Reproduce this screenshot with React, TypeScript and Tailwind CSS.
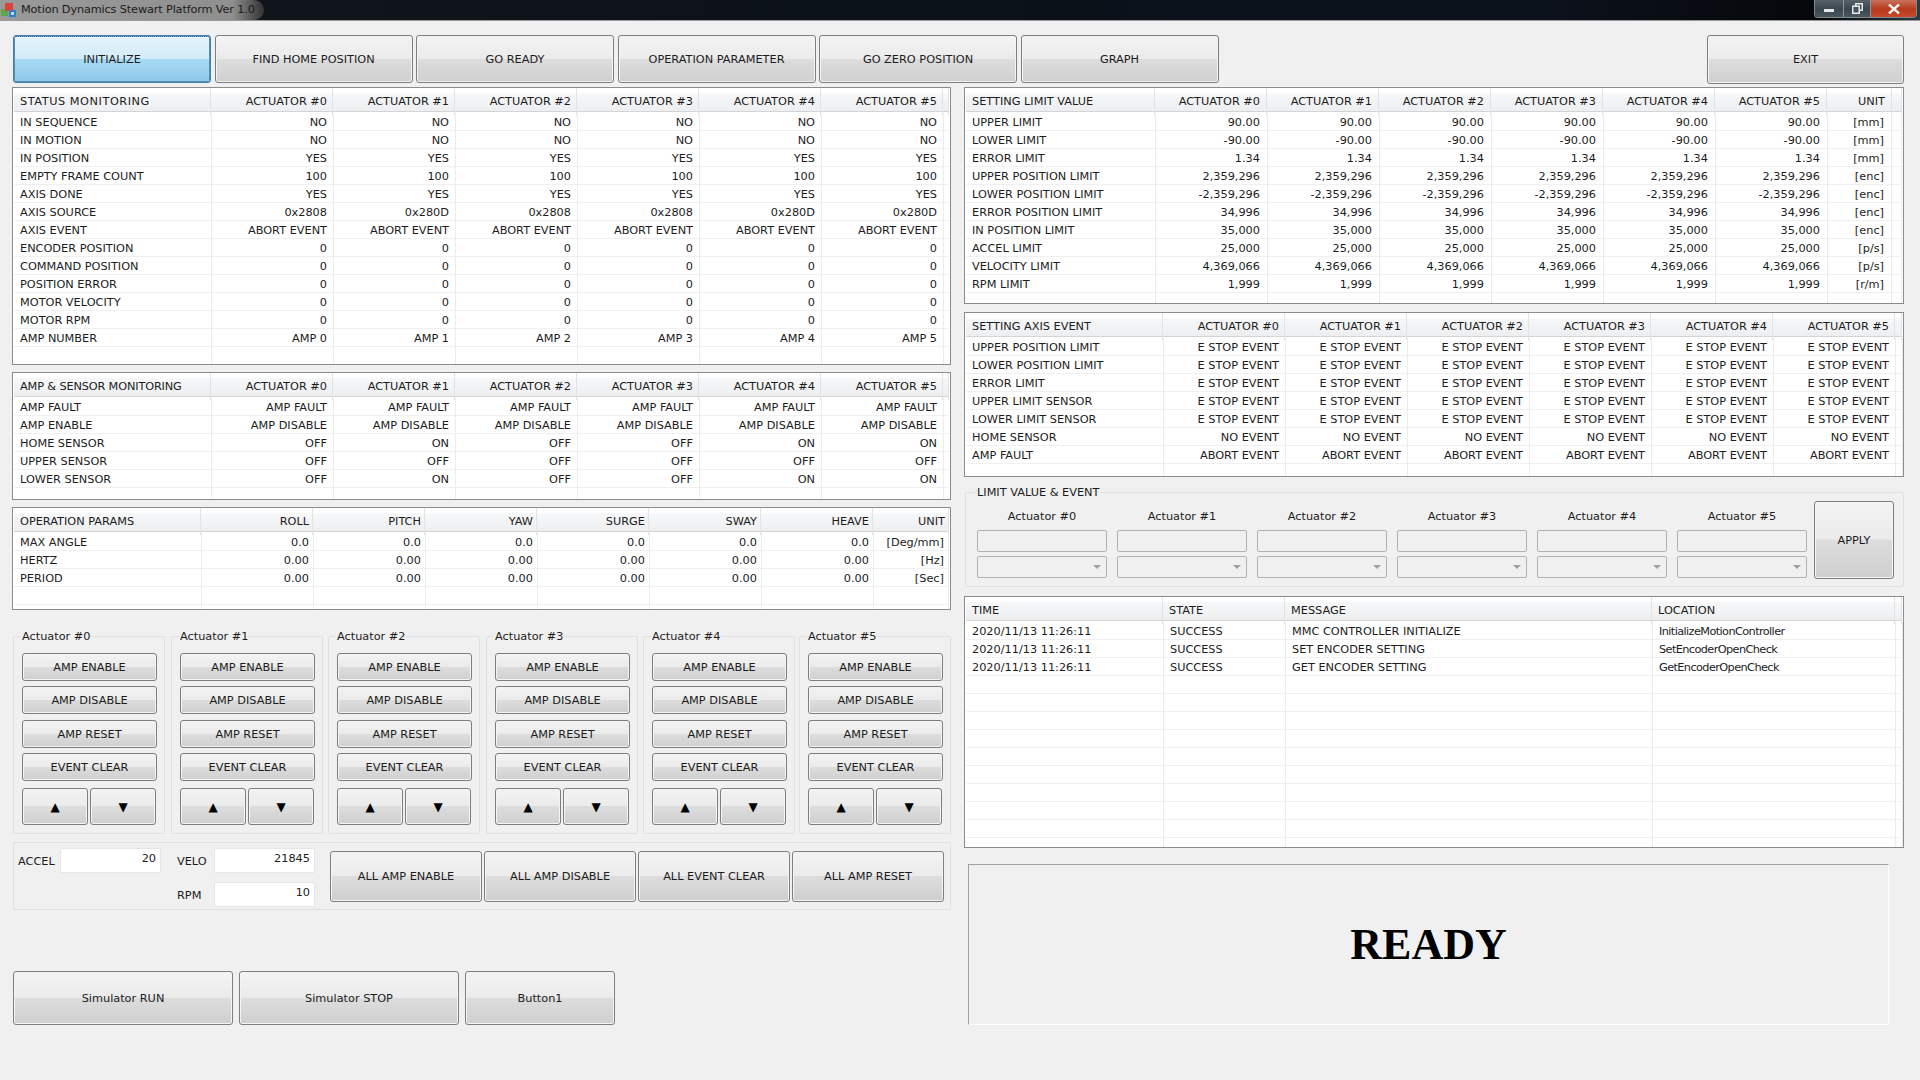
import React from "react";

const ACT = ["ACTUATOR #0", "ACTUATOR #1", "ACTUATOR #2", "ACTUATOR #3", "ACTUATOR #4", "ACTUATOR #5"];
const LABELS = ["Actuator #0", "Actuator #1", "Actuator #2", "Actuator #3", "Actuator #4", "Actuator #5"];

const same = (label: string, v: string, extra?: string): string[] => {
  const r = [label, v, v, v, v, v, v];
  if (extra) r.push(extra);
  return r;
};

const statusRows: string[][] = [
  same("IN SEQUENCE", "NO"),
  same("IN MOTION", "NO"),
  same("IN POSITION", "YES"),
  same("EMPTY FRAME COUNT", "100"),
  same("AXIS DONE", "YES"),
  ["AXIS SOURCE", "0x2808", "0x280D", "0x2808", "0x2808", "0x280D", "0x280D"],
  same("AXIS EVENT", "ABORT EVENT"),
  same("ENCODER POSITION", "0"),
  same("COMMAND POSITION", "0"),
  same("POSITION ERROR", "0"),
  same("MOTOR VELOCITY", "0"),
  same("MOTOR RPM", "0"),
  ["AMP NUMBER", "AMP 0", "AMP 1", "AMP 2", "AMP 3", "AMP 4", "AMP 5"],
];

const ampRows: string[][] = [
  same("AMP FAULT", "AMP FAULT"),
  same("AMP ENABLE", "AMP DISABLE"),
  ["HOME SENSOR", "OFF", "ON", "OFF", "OFF", "ON", "ON"],
  same("UPPER SENSOR", "OFF"),
  ["LOWER SENSOR", "OFF", "ON", "OFF", "OFF", "ON", "ON"],
];

const opRows: string[][] = [
  ["MAX ANGLE", "0.0", "0.0", "0.0", "0.0", "0.0", "0.0", "[Deg/mm]"],
  ["HERTZ", "0.00", "0.00", "0.00", "0.00", "0.00", "0.00", "[Hz]"],
  ["PERIOD", "0.00", "0.00", "0.00", "0.00", "0.00", "0.00", "[Sec]"],
];

const limitRows: string[][] = [
  same("UPPER LIMIT", "90.00", "[mm]"),
  same("LOWER LIMIT", "-90.00", "[mm]"),
  same("ERROR LIMIT", "1.34", "[mm]"),
  same("UPPER POSITION LIMIT", "2,359,296", "[enc]"),
  same("LOWER POSITION LIMIT", "-2,359,296", "[enc]"),
  same("ERROR POSITION LIMIT", "34,996", "[enc]"),
  same("IN POSITION LIMIT", "35,000", "[enc]"),
  same("ACCEL LIMIT", "25,000", "[p/s]"),
  same("VELOCITY LIMIT", "4,369,066", "[p/s]"),
  same("RPM LIMIT", "1,999", "[r/m]"),
];

const eventRows: string[][] = [
  same("UPPER POSITION LIMIT", "E STOP EVENT"),
  same("LOWER POSITION LIMIT", "E STOP EVENT"),
  same("ERROR LIMIT", "E STOP EVENT"),
  same("UPPER LIMIT SENSOR", "E STOP EVENT"),
  same("LOWER LIMIT SENSOR", "E STOP EVENT"),
  same("HOME SENSOR", "NO EVENT"),
  same("AMP FAULT", "ABORT EVENT"),
];

const logRows: string[][] = [
  ["2020/11/13 11:26:11", "SUCCESS", "MMC CONTROLLER INITIALIZE", "InitializeMotionController"],
  ["2020/11/13 11:26:11", "SUCCESS", "SET ENCODER SETTING", "SetEncoderOpenCheck"],
  ["2020/11/13 11:26:11", "SUCCESS", "GET ENCODER SETTING", "GetEncoderOpenCheck"],
];

interface TableProps {
  heads: React.ReactNode[];
  rows: string[][];
  headCols: string;
  rowCols: string;
  cols: number;
  height: string;
  blanks?: number;
  leftAll?: boolean;
  headPad?: string;
  rowPad?: string;
}

// cols = cells per row, including the narrow stub at the right edge
const DataTable: React.FC<TableProps> = ({
  heads,
  rows,
  headCols,
  rowCols,
  cols,
  height,
  blanks = 2,
  leftAll,
  headPad = "pr-[5px]",
  rowPad = "pr-[6px]",
}) => {
  const blank = Array.from({ length: blanks }, () => [] as string[]);
  const align = (i: number, pad: string) => (i === 0 || leftAll ? "pl-[6px] text-left" : `${pad} text-right`);
  return (
    <div className={`border border-[#8c8c8c] bg-white px-px overflow-hidden ${height}`}>
      <div className={`grid ${headCols} h-[24px] mb-px border-b border-[#d4d4d4] bg-[linear-gradient(#ffffff_0%,#ffffff_21%,#f7f8f9_22%,#edeef0_100%)]`}>
        {Array.from({ length: cols }, (_, i) => (
          <div key={i} className={`border-r border-[#e2e3e5] leading-[27px] whitespace-nowrap ${align(i, headPad)}`}>
            {heads[i]}
          </div>
        ))}
      </div>
      {[...rows, ...blank].map((row, r) => (
        <div key={r} className={`grid ${rowCols} h-[18px] border-b border-[#f0f0f0]`}>
          {Array.from({ length: cols }, (_, i) => (
            <div
              key={i}
              className={`border-r border-[#ececec] leading-[19px] whitespace-nowrap ${align(i, rowPad)} ${
                leftAll && i === 3 ? "tracking-[-0.6px]" : ""
              }`}
            >
              {row[i]}
            </div>
          ))}
        </div>
      ))}
    </div>
  );
};

interface BtnProps {
  label: React.ReactNode;
  size: string;
  active?: boolean;
}

const Btn: React.FC<BtnProps> = ({ label, size, active }) => (
  <button
    type="button"
    className={`${size} shrink-0 rounded-[3px] border pt-[2px] text-center ${
      active
        ? "border-[#3c7fb1] bg-[linear-gradient(#e6f4fc_0%,#d2ecf9_49%,#a9daf3_50%,#8cc8ea_100%)] shadow-[inset_0_0_0_1px_#7fbde0] outline-1 outline-dotted -outline-offset-2 outline-[#3f5f75]"
        : "border-[#7e7e7e] bg-[linear-gradient(#f3f3f3_0%,#ebebeb_49%,#dddddd_50%,#cfcfcf_100%)] shadow-[inset_0_0_0_1px_#f4f4f4]"
    }`}
  >
    {label}
  </button>
);

const ActuatorGroup: React.FC<{ name: string }> = ({ name }) => (
  <div className="w-[152px] h-[198px] border border-[#e0e0e0] rounded-[2px] pl-[8px]">
    <div className="w-fit -mt-[9px] -ml-[1px] px-[1px] bg-[#f0f0f0] h-[17px] leading-[17px]">{name}</div>
    <div className="flex flex-col pt-[8px] w-[135px]">
      <Btn label="AMP ENABLE" size="w-[135px] h-[28px]" />
      <div className="h-[5px]" />
      <Btn label="AMP DISABLE" size="w-[135px] h-[28px]" />
      <div className="h-[6px]" />
      <Btn label="AMP RESET" size="w-[135px] h-[28px]" />
      <div className="h-[5px]" />
      <Btn label="EVENT CLEAR" size="w-[135px] h-[28px]" />
      <div className="flex gap-[2px] mt-[7px]">
        <Btn label={<span className="text-[12px] text-black">▲</span>} size="w-[66px] h-[37px]" />
        <Btn label={<span className="text-[12px] text-black">▼</span>} size="w-[66px] h-[37px]" />
      </div>
    </div>
  </div>
);

const NumberBox: React.FC<{ value: string }> = ({ value }) => (
  <div className="w-[101px] h-[25px] bg-white border border-[#e6e6e6] rounded-[1px] text-right pr-[4px] leading-[20px] text-[#222]">
    {value}
  </div>
);

const TitleBar: React.FC = () => (
  <div className="h-[21px] flex items-start justify-between border-b border-[#9a9a9a] bg-[linear-gradient(90deg,#11161c_0%,#0b1119_55%,#0c121c_80%,#05070a_95%,#2c3a42_100%)]">
    <div className="h-[20px] w-[264px] flex items-center rounded-r-[10px] bg-[linear-gradient(90deg,#9a9a9a_0%,#8f8f8f_88%,#333333_100%)]">
      <svg className="ml-[1px] w-[16px] h-[16px]" viewBox="0 0 16 16">
        <rect x="0" y="7" width="7" height="7" fill="#5fa84a" />
        <rect x="4" y="1" width="8" height="8" fill="#d9443a" />
        <rect x="8" y="8" width="7" height="7" fill="#2f7fc1" />
        <rect x="10" y="10" width="3" height="3" fill="#bcdcf0" />
      </svg>
      <span className="ml-[4px] text-[#1b1b1b] whitespace-nowrap tracking-[-0.15px]">Motion Dynamics Stewart Platform Ver 1.0</span>
    </div>
    <div className="flex h-[18px] w-[103px] mr-[3px] rounded-b-[4px] border border-t-0 border-[#7f8a90] overflow-hidden">
      <div className="w-[29px] border-r border-[#8a949a] flex items-center justify-center bg-[linear-gradient(#56616a,#3a4650_55%,#4a5660)]">
        <div className="w-[10px] h-[3px] bg-[#e8e8e8] mt-[4px]" />
      </div>
      <div className="w-[27px] border-r border-[#8a949a] flex items-center justify-center bg-[linear-gradient(#56616a,#3a4650_55%,#4a5660)]">
        <svg className="w-[11px] h-[11px]" viewBox="0 0 11 11" fill="none" stroke="#e8e8e8" strokeWidth="1.5">
          <rect x="3.75" y="0.75" width="6.5" height="6.5" />
          <rect x="0.75" y="3.25" width="6.5" height="7" fill="#46525c" />
        </svg>
      </div>
      <div className="flex-1 flex items-center justify-center bg-[linear-gradient(#c8705c,#b83a1c_55%,#c84a2a)]">
        <svg className="w-[12px] h-[10px]" viewBox="0 0 12 10" stroke="#f4f4f4" strokeWidth="2.4">
          <path d="M1 0.5 L11 9.5 M11 0.5 L1 9.5" />
        </svg>
      </div>
    </div>
  </div>
);

const App: React.FC = () => {
  return (
    <div className="w-[1920px] h-[1080px] overflow-hidden bg-[#f0f0f0] text-[11.3px] text-[#1c1c1c] font-['DejaVu_Sans',sans-serif]">
      <TitleBar />

      <div className="flex items-start gap-[3.5px] mt-[14px] ml-[13px] mr-[16px] h-[52px]">
        <Btn label="INITIALIZE" size="w-[198px] h-[48px]" active />
        <Btn label="FIND HOME POSITION" size="w-[198px] h-[48px]" />
        <Btn label="GO READY" size="w-[198px] h-[48px]" />
        <Btn label="OPERATION PARAMETER" size="w-[198px] h-[48px]" />
        <Btn label="GO ZERO POSITION" size="w-[198px] h-[48px]" />
        <Btn label="GRAPH" size="w-[198px] h-[48px]" />
        <div className="ml-auto">
          <Btn label="EXIT" size="w-[197px] h-[49px]" />
        </div>
      </div>

      <div className="flex">
        {/* left column */}
        <div className="w-[939px] ml-[12px] flex flex-col">
          <DataTable
            heads={[<span className="tracking-[0.55px]">STATUS MONITORING</span>, ...ACT]}
            rows={statusRows}
            cols={8}
            headCols="grid-cols-[197px_repeat(6,122px)_1fr]"
            rowCols="grid-cols-[198px_repeat(6,122px)_1fr]"
            height="h-[278px]"
          />
          <div className="mt-[7px]">
            <DataTable
              heads={[<span className="tracking-[-0.15px]">AMP &amp; SENSOR MONITORING</span>, ...ACT]}
              rows={ampRows}
              cols={8}
              headCols="grid-cols-[197px_repeat(6,122px)_1fr]"
              rowCols="grid-cols-[198px_repeat(6,122px)_1fr]"
              height="h-[128px]"
            />
          </div>
          <div className="mt-[7px]">
            <DataTable
              heads={["OPERATION PARAMS", "ROLL", "PITCH", "YAW", "SURGE", "SWAY", "HEAVE", "UNIT"]}
              rows={opRows}
              cols={8}
              headPad="pr-[3px]"
              rowPad="pr-[4px]"
              headCols="grid-cols-[187px_repeat(6,112px)_1fr]"
              rowCols="grid-cols-[188px_repeat(6,112px)_1fr]"
              height="h-[103px]"
            />
          </div>

          <div className="grid grid-cols-[158px_157px_158px_157px_156px_152px] ml-[1px] mt-[26px]">
            {LABELS.map((name) => (
              <ActuatorGroup key={name} name={name} />
            ))}
          </div>

          <div className="flex ml-[1px] mt-[8px] h-[68px] w-[938px] border border-[#e0e0e0] rounded-[2px] pl-[4px] pt-[5px]">
            <div className="flex items-start">
              <span className="w-[42px] leading-[27px]">ACCEL</span>
              <NumberBox value="20" />
            </div>
            <div className="flex flex-col gap-[7px] ml-[16px]">
              <div className="flex">
                <span className="w-[37px] leading-[27px]">VELO</span>
                <NumberBox value="21845" />
              </div>
              <div className="flex">
                <span className="w-[37px] leading-[27px]">RPM</span>
                <NumberBox value="10" />
              </div>
            </div>
            <div className="flex gap-[2px] ml-[15px] mt-[3px]">
              <Btn label="ALL AMP ENABLE" size="w-[152px] h-[51px]" />
              <Btn label="ALL AMP DISABLE" size="w-[152px] h-[51px]" />
              <Btn label="ALL EVENT CLEAR" size="w-[152px] h-[51px]" />
              <Btn label="ALL AMP RESET" size="w-[152px] h-[51px]" />
            </div>
          </div>

          <div className="flex ml-[1px] mt-[61px] gap-[6px]">
            <Btn label="Simulator RUN" size="w-[220px] h-[54px]" />
            <Btn label="Simulator STOP" size="w-[220px] h-[54px]" />
            <Btn label="Button1" size="w-[150px] h-[54px]" />
          </div>
        </div>

        {/* right column */}
        <div className="w-[940px] ml-[13px] flex flex-col">
          <DataTable
            heads={["SETTING LIMIT VALUE", ...ACT, "UNIT"]}
            rows={limitRows}
            cols={9}
            headPad="pr-[6px]"
            rowPad="pr-[7px]"
            headCols="grid-cols-[189px_repeat(6,112px)_65px_1fr]"
            rowCols="grid-cols-[190px_repeat(6,112px)_64px_1fr]"
            height="h-[217px]"
          />
          <div className="mt-[8px]">
            <DataTable
              heads={["SETTING AXIS EVENT", ...ACT]}
              rows={eventRows}
              cols={8}
              headCols="grid-cols-[197px_repeat(6,122px)_1fr]"
              rowCols="grid-cols-[198px_repeat(6,122px)_1fr]"
              height="h-[165px]"
            />
          </div>

          <div className="ml-[1px] mt-[15px] h-[95px] border border-[#e0e0e0] rounded-[2px] flex pl-[11px]">
            <div>
              <div className="w-fit -mt-[9px] -ml-[1px] px-[1px] bg-[#f0f0f0] h-[17px] leading-[17px]">LIMIT VALUE &amp; EVENT</div>
              <div className="grid grid-cols-[repeat(6,130px)] gap-x-[10px] mt-[9px]">
                {LABELS.map((name) => (
                  <div key={name} className="flex flex-col">
                    <div className="h-[14px] leading-[14px] text-center">{name}</div>
                    <div className="mt-[6px] h-[22px] border border-[#adb2b5] rounded-[2px] bg-[#f0f0f0]" />
                    <div className="mt-[4px] h-[22px] border border-[#adb2b5] rounded-[2px] bg-[#f0f0f0] flex items-center justify-end pr-[5px]">
                      <div className="w-0 h-0 border-x-[4px] border-x-transparent border-t-[4px] border-t-[#a0a0a0]" />
                    </div>
                  </div>
                ))}
              </div>
            </div>
            <div className="ml-[7px] mt-[8px]">
              <Btn label="APPLY" size="w-[80px] h-[78px]" />
            </div>
          </div>

          <div className="mt-[9px]">
            <DataTable
              heads={["TIME", "STATE", "MESSAGE", "LOCATION"]}
              rows={logRows}
              cols={5}
              blanks={11}
              leftAll
              headCols="grid-cols-[197px_122px_367px_243px_1fr]"
              rowCols="grid-cols-[198px_122px_367px_243px_1fr]"
              height="h-[252px]"
            />
          </div>

          <div className="mt-[16px] ml-[4px] w-[921px] h-[161px] border border-[#a0a0a0] border-r-white border-b-white flex items-center justify-center">
            <span className="font-['Liberation_Serif',serif] font-bold text-[44px] text-black">READY</span>
          </div>
        </div>
      </div>
    </div>
  );
};

export default App;
